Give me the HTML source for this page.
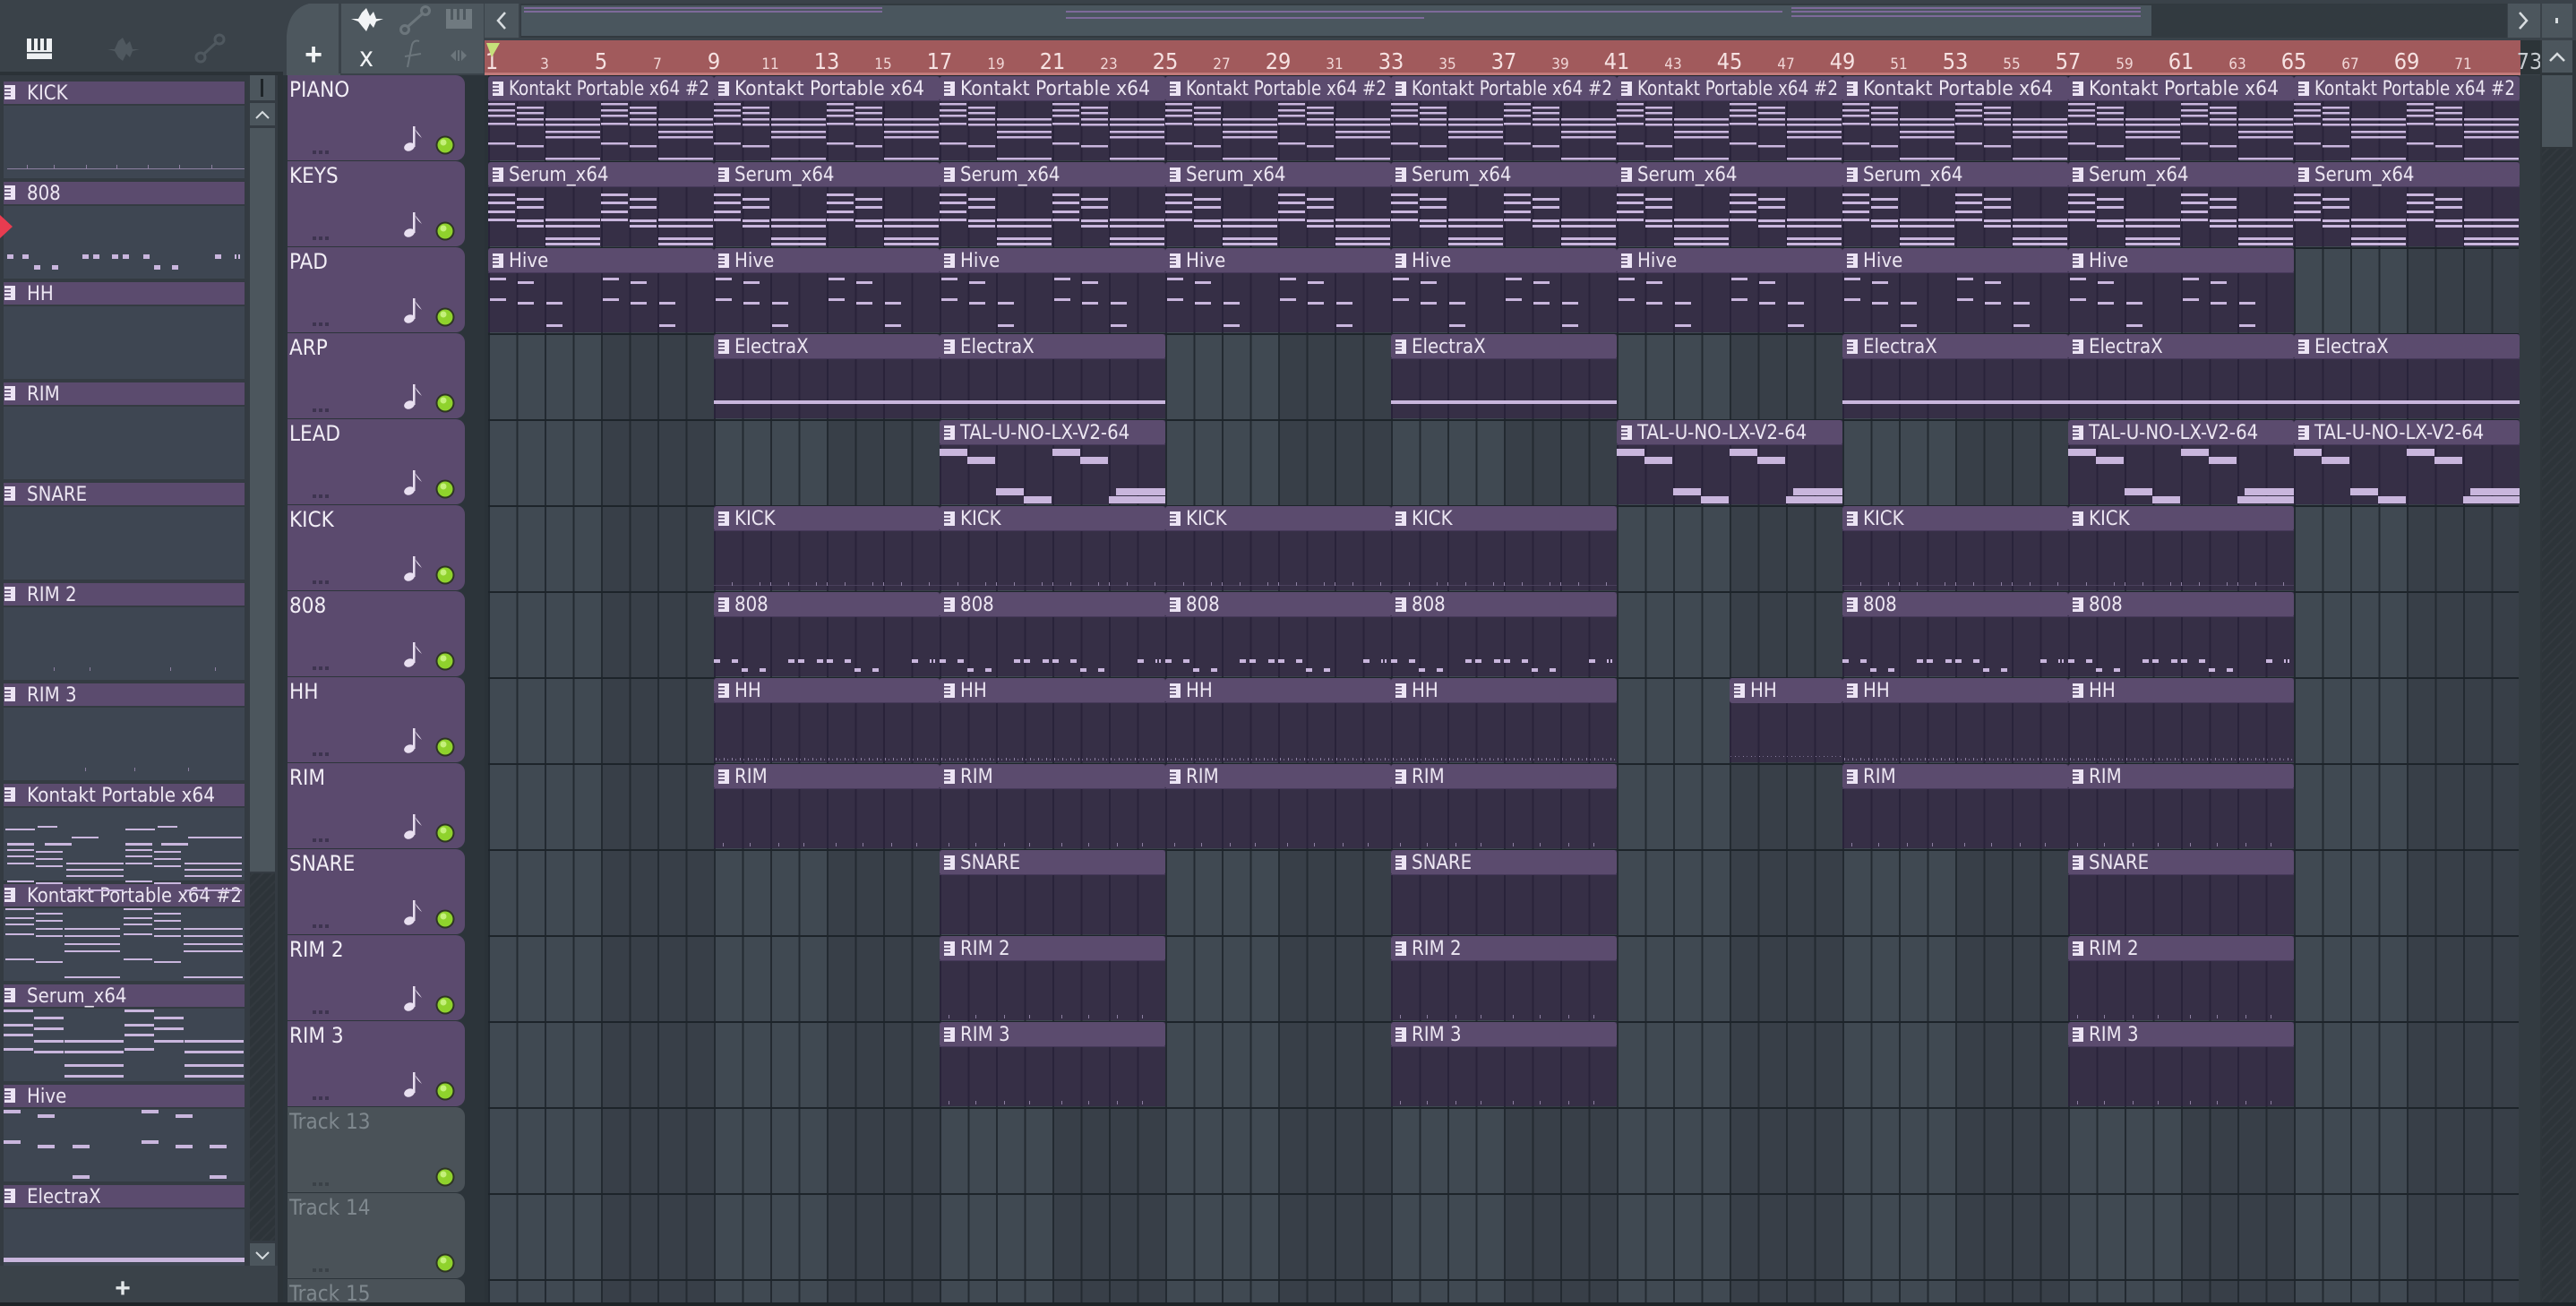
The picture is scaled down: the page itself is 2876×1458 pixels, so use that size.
<!DOCTYPE html>
<html><head><meta charset="utf-8"><style>
html,body{margin:0;padding:0;background:#3a4249;overflow:hidden;width:2876px;height:1458px}
svg{display:block}
text{font-family:"Liberation Sans Narrow","DejaVu Sans Condensed","Liberation Sans",sans-serif}
.ct{fill:#ece6f2;font-size:22px}
.hn{fill:#f2eef6;font-size:24px}
.he{fill:#7f888e;font-size:24px}
.rb{fill:#f6e2e2;font-size:25px;text-anchor:middle}
.rs{fill:#f0d6d6;font-size:17px;text-anchor:middle}
.lt{fill:#ece6f2;font-size:22px}
</style></head><body>
<svg width="2876" height="1458" viewBox="0 0 2876 1458" xmlns="http://www.w3.org/2000/svg">
<defs>
<pattern id="gp" x="545" y="84" width="252" height="96" patternUnits="userSpaceOnUse">
<rect width="126" height="96" fill="#404952"/><rect x="126" width="126" height="96" fill="#383f48"/>
<rect x="0" width="2" height="96" fill="#232a31"/><rect x="31.5" width="2" height="96" fill="#232a31"/><rect x="63" width="2" height="96" fill="#232a31"/><rect x="94.5" width="2" height="96" fill="#232a31"/><rect x="126" width="2" height="96" fill="#232a31"/><rect x="157.5" width="2" height="96" fill="#232a31"/><rect x="189" width="2" height="96" fill="#232a31"/><rect x="220.5" width="2" height="96" fill="#232a31"/>
<rect width="252" height="2" fill="#1d242a"/>
</pattern>
<pattern id="bp" x="0" y="0" width="31.5" height="200" patternUnits="userSpaceOnUse">
<rect width="31.5" height="200" fill="#362f46"/><rect width="2" height="200" fill="#29233a"/>
</pattern>
<g id="ic"><rect x="5" y="7" width="12" height="16" fill="#ece4f4"/><rect x="5" y="10" width="7" height="1.6" fill="#5b4b6e"/><rect x="5" y="14" width="7" height="1.6" fill="#5b4b6e"/><rect x="5" y="18" width="7" height="1.6" fill="#5b4b6e"/></g>
<g id="c"><rect x="0" y="1" width="252" height="94" fill="url(#bp)"/><rect x="0" y="1" width="252" height="28" rx="3" fill="#5b4b6e"/><rect x="0" y="28" width="252" height="1" fill="#46395a"/><use href="#ic"/></g>
<g id="ch"><rect x="0" y="1" width="126" height="94" fill="url(#bp)"/><rect x="0" y="1" width="126" height="28" rx="3" fill="#5b4b6e"/><use href="#ic"/></g>
<g id="pq" fill="#c9b6dd">
<rect x="0" y="31" width="30" height="2.5"/><rect x="0" y="38" width="30" height="2.5"/><rect x="0" y="44" width="30" height="2.5"/><rect x="0" y="53" width="30" height="2.5"/><rect x="0" y="75" width="30" height="2.5"/>
<rect x="32" y="35" width="30" height="2.5"/><rect x="32" y="41" width="30" height="2.5"/><rect x="32" y="48" width="30" height="2.5"/><rect x="32" y="54" width="30" height="2.5"/><rect x="32" y="78" width="30" height="2.5"/>
<rect x="64" y="48" width="61" height="2.5"/><rect x="64" y="54" width="61" height="2.5"/><rect x="64" y="62" width="61" height="2.5"/><rect x="64" y="68" width="61" height="2.5"/><rect x="64" y="92" width="61" height="2.5"/>
</g>
<g id="nP"><use href="#pq"/><use href="#pq" x="126"/></g>
<g id="kq" fill="#c9b6dd">
<rect x="0" y="36" width="30" height="3"/><rect x="0" y="45" width="30" height="3"/><rect x="0" y="55" width="30" height="3"/><rect x="0" y="64" width="30" height="3"/>
<rect x="32" y="41" width="30" height="3"/><rect x="32" y="50" width="30" height="3"/><rect x="32" y="65" width="30" height="3"/><rect x="32" y="71" width="30" height="3"/>
<rect x="64" y="64" width="61" height="3"/><rect x="64" y="71" width="61" height="3"/><rect x="64" y="85" width="61" height="3"/><rect x="64" y="91" width="61" height="3"/>
</g>
<g id="nK"><use href="#kq"/><use href="#kq" x="126"/></g>
<g id="hq" fill="#c9b6dd"><rect x="2" y="34" width="18" height="3"/><rect x="33" y="38" width="18" height="3"/><rect x="2" y="57" width="18" height="3"/><rect x="33" y="61" width="18" height="3"/><rect x="65" y="61" width="18" height="3"/><rect x="65" y="86" width="18" height="3"/></g>
<g id="nH"><use href="#hq"/><use href="#hq" x="126"/></g>
<g id="nE"><rect x="0" y="75" width="252" height="4" fill="#c9b6dd"/></g>
<g id="nT" fill="#c9b6dd"><rect x="0" y="33" width="31" height="8"/><rect x="31" y="42" width="31" height="8"/><rect x="63" y="77" width="31" height="8"/><rect x="94" y="86" width="31" height="8"/><rect x="126" y="33" width="31" height="8"/><rect x="157" y="42" width="31" height="8"/><rect x="197" y="77" width="55" height="8"/><rect x="189" y="86" width="63" height="8"/></g>
<g id="nD" fill="#c9b6dd"><rect x="0" y="76" width="7" height="4"/><rect x="20" y="76" width="7" height="4"/><rect x="31" y="86" width="7" height="4"/><rect x="51" y="86" width="7" height="4"/><rect x="83" y="76" width="7" height="4"/><rect x="94" y="76" width="7" height="4"/><rect x="115" y="76" width="7" height="4"/><rect x="126" y="76" width="7" height="4"/><rect x="146" y="76" width="7" height="4"/><rect x="157" y="86" width="7" height="4"/><rect x="177" y="86" width="7" height="4"/><rect x="221" y="76" width="7" height="4"/><rect x="241" y="76" width="2" height="4"/><rect x="245" y="76" width="2" height="4"/></g>
<g id="nKk" fill="#8c7fa0"><rect x="0" y="89" width="252" height="1" fill="#4a405c"/><rect x="20" y="86" width="1" height="4"/><rect x="51" y="86" width="1" height="4"/><rect x="63" y="86" width="1" height="4"/><rect x="83" y="86" width="1" height="4"/><rect x="114" y="86" width="1" height="4"/><rect x="126" y="86" width="1" height="4"/><rect x="146" y="86" width="1" height="4"/><rect x="177" y="86" width="1" height="4"/><rect x="189" y="86" width="1" height="4"/><rect x="209" y="86" width="1" height="4"/><rect x="240" y="86" width="1" height="4"/></g>
<pattern id="hhp" x="0" y="0" width="9" height="10" patternUnits="userSpaceOnUse"><rect x="2" y="0" width="1" height="5" fill="#8c7fa0"/><rect x="6" y="1" width="1" height="4" fill="#6f6485"/></pattern>
<g id="nHH"><rect x="0" y="88" width="252" height="5" fill="url(#hhp)"/></g>
<g id="nR" fill="#8c7fa0"><rect x="10" y="89" width="1" height="4"/><rect x="40" y="89" width="1" height="4"/><rect x="72" y="89" width="1" height="4"/><rect x="100" y="89" width="1" height="4"/><rect x="136" y="89" width="1" height="4"/><rect x="166" y="89" width="1" height="4"/><rect x="198" y="89" width="1" height="4"/><rect x="226" y="89" width="1" height="4"/></g>
<g id="hd"><rect x="0" y="0" width="198" height="95" rx="10" fill="#5b4a6e"/><rect x="0" y="0" width="20" height="95" fill="#5b4a6e"/>
<rect x="28" y="84" width="4" height="4" fill="#3e3450"/><rect x="35" y="84" width="4" height="4" fill="#3e3450"/><rect x="42" y="84" width="4" height="4" fill="#3e3450"/>
<ellipse cx="136" cy="80" rx="6" ry="4.5" fill="#e8dff0" transform="rotate(-20 136 80)"/><rect x="140" y="57" width="2.5" height="23" fill="#e8dff0"/><path d="M141 57 Q144 66 150 70 Q146 64 142 60 Z" fill="#e8dff0"/>
<circle cx="176" cy="78" r="10.5" fill="#2e3524"/><circle cx="176" cy="78" r="8.5" fill="#8fd22c"/><circle cx="174" cy="75" r="3.5" fill="#c4f07a"/></g>
<g id="he"><rect x="0" y="0" width="198" height="95" rx="10" fill="#4a5258"/><rect x="0" y="0" width="20" height="95" fill="#4a5258"/>
<rect x="28" y="84" width="4" height="4" fill="#3b4248"/><rect x="35" y="84" width="4" height="4" fill="#3b4248"/><rect x="42" y="84" width="4" height="4" fill="#3b4248"/>
<circle cx="176" cy="78" r="10.5" fill="#2e3524"/><circle cx="176" cy="78" r="8.5" fill="#8fd22c"/><circle cx="174" cy="75" r="3.5" fill="#c4f07a"/></g>
<g id="li"><rect x="4" y="0" width="269" height="25" fill="#5b4b6e"/><rect x="4" y="27" width="269" height="81" fill="#3e4652"/><use href="#ic" y="-3"/></g>
<pattern id="hatch" width="8" height="8" patternUnits="userSpaceOnUse" patternTransform="rotate(45)"><rect width="8" height="8" fill="#2d3439"/><rect width="2" height="8" fill="#33393f"/></pattern>
</defs>

<rect x="0" y="0" width="2876" height="84" fill="#3a4249"/>
<rect x="0" y="80" width="316" height="4" fill="#2b3237"/>
<g fill="#eef0f2"><rect x="30" y="43" width="28" height="23"/></g>
<g fill="#3a4249"><rect x="35" y="43" width="3" height="13"/><rect x="42" y="43" width="3" height="13"/><rect x="49" y="43" width="3" height="13"/><rect x="30" y="58" width="28" height="1.5"/></g>
<path d="M120 55 L128 55 L132 46 L137 42 L141 50 L145 46 L148 55 L156 55 L148 57 L145 64 L141 60 L137 68 L132 64 L128 57 Z" fill="#4f585f"/>
<g stroke="#4f585f" stroke-width="3" fill="none"><circle cx="224" cy="64" r="5"/><circle cx="245" cy="44" r="5"/><line x1="228" y1="60" x2="241" y2="48"/></g>
<path d="M320 84 L320 40 Q322 10 345 4 L380 4 L380 84 Z" fill="#4d575e"/>
<rect x="380" y="4" width="160" height="78" fill="#4d575e"/>
<rect x="378" y="4" width="3" height="78" fill="#3a4249"/>
<text x="350" y="72" fill="#f2f4f6" font-size="34" text-anchor="middle" style="font-family:'Liberation Sans',sans-serif;font-weight:bold">+</text>
<path d="M392 21 L400 21 L404 14 L409 9 L413 18 L417 13 L420 21 L428 21 L420 24 L417 31 L413 26 L409 35 L404 29 L400 24 Z" fill="#f2f4f6"/>
<g stroke="#6c767c" stroke-width="3" fill="none"><circle cx="452" cy="33" r="4.5"/><circle cx="475" cy="12" r="4.5"/><line x1="455" y1="30" x2="472" y2="15"/></g>
<rect x="498" y="10" width="29" height="22" fill="#707a80"/><g fill="#4d575e"><rect x="503" y="10" width="3" height="12"/><rect x="510" y="10" width="3" height="12"/><rect x="517" y="10" width="3" height="12"/></g>
<text x="409" y="74" fill="#f2f4f6" font-size="30" text-anchor="middle">x</text>
<path d="M455 75 L460 50 Q462 44 468 46 M452 63 L470 60" stroke="#6c767c" stroke-width="2" fill="none"/>
<path d="M503 62 L509 56 L509 68 Z M521 62 L515 56 L515 68 Z" fill="#6c767c"/><rect x="511" y="56" width="2" height="12" fill="#6c767c"/>
<rect x="541" y="4" width="38" height="38" fill="#4c565d"/><path d="M564 14 L556 23 L564 32" stroke="#d8dde0" stroke-width="2.5" fill="none"/>
<rect x="581" y="4" width="2218" height="38" fill="#323a40"/>
<rect x="582" y="6" width="1820" height="34" fill="#4a565e"/>
<rect x="585" y="8" width="400" height="2" fill="#7d6a9a"/><rect x="585" y="12" width="400" height="2" fill="#7d6a9a"/>
<rect x="1190" y="12" width="800" height="2" fill="#7d6a9a"/><rect x="1190" y="19" width="400" height="2" fill="#7d6a9a"/>
<rect x="2000" y="8" width="390" height="2" fill="#7d6a9a"/><rect x="2000" y="12" width="390" height="2" fill="#7d6a9a"/><rect x="2000" y="17" width="390" height="2" fill="#7d6a9a"/>
<rect x="2800" y="4" width="36" height="38" fill="#4c565d"/><path d="M2813 14 L2821 23 L2813 32" stroke="#d8dde0" stroke-width="2.5" fill="none"/>
<rect x="2838" y="4" width="34" height="38" fill="#4c565d"/><rect x="2853" y="20" width="3" height="6" fill="#d8dde0"/>

<rect x="541" y="45" width="2273" height="38" fill="#a15a5c"/>
<rect x="2814" y="45" width="22" height="38" fill="#2c3438"/>
<rect x="541" y="81" width="2273" height="3" fill="#c27a7a"/>
<text class="rs" x="608" y="77">3</text><text class="rb" x="671" y="77">5</text><text class="rs" x="734" y="77">7</text><text class="rb" x="797" y="77">9</text><text class="rs" x="860" y="77">11</text><text class="rb" x="923" y="77">13</text><text class="rs" x="986" y="77">15</text><text class="rb" x="1049" y="77">17</text><text class="rs" x="1112" y="77">19</text><text class="rb" x="1175" y="77">21</text><text class="rs" x="1238" y="77">23</text><text class="rb" x="1301" y="77">25</text><text class="rs" x="1364" y="77">27</text><text class="rb" x="1427" y="77">29</text><text class="rs" x="1490" y="77">31</text><text class="rb" x="1553" y="77">33</text><text class="rs" x="1616" y="77">35</text><text class="rb" x="1679" y="77">37</text><text class="rs" x="1742" y="77">39</text><text class="rb" x="1805" y="77">41</text><text class="rs" x="1868" y="77">43</text><text class="rb" x="1931" y="77">45</text><text class="rs" x="1994" y="77">47</text><text class="rb" x="2057" y="77">49</text><text class="rs" x="2120" y="77">51</text><text class="rb" x="2183" y="77">53</text><text class="rs" x="2246" y="77">55</text><text class="rb" x="2309" y="77">57</text><text class="rs" x="2372" y="77">59</text><text class="rb" x="2435" y="77">61</text><text class="rs" x="2498" y="77">63</text><text class="rb" x="2561" y="77">65</text><text class="rs" x="2624" y="77">67</text><text class="rb" x="2687" y="77">69</text><text class="rs" x="2750" y="77">71</text><text class="rb" x="2824" y="77" style="fill:#c6ccd0">73</text>
<text class="rb" x="549" y="77">1</text>
<path d="M543 48 L558 48 L549 64 Z" fill="#c6e07a"/>

<rect x="2836" y="45" width="40" height="1413" fill="#2f363b"/>
<rect x="2838" y="45" width="34" height="36" fill="#4c565d"/><path d="M2847 68 L2855 60 L2863 68" stroke="#d8dde0" stroke-width="2.5" fill="none"/>
<rect x="2838" y="84" width="34" height="80" fill="#4a545b"/>
<rect x="2838" y="166" width="34" height="1292" fill="url(#hatch)"/>

<rect x="541" y="84" width="2273" height="1374" fill="url(#gp)"/>
<rect x="519" y="84" width="22" height="1374" fill="#2c343a"/>
<rect x="541" y="84" width="4" height="1374" fill="#2a3238"/>
<rect x="2812" y="84" width="24" height="1374" fill="#333b41"/>

<rect x="316" y="84" width="203" height="1374" fill="#2c343a"/>
<use href="#hd" x="321" y="84"/><use href="#hd" x="321" y="180"/><use href="#hd" x="321" y="276"/><use href="#hd" x="321" y="372"/><use href="#hd" x="321" y="468"/><use href="#hd" x="321" y="564"/><use href="#hd" x="321" y="660"/><use href="#hd" x="321" y="756"/><use href="#hd" x="321" y="852"/><use href="#hd" x="321" y="948"/><use href="#hd" x="321" y="1044"/><use href="#hd" x="321" y="1140"/>
<use href="#he" x="321" y="1236"/><use href="#he" x="321" y="1332"/><use href="#he" x="321" y="1428"/>
<text class="hn" x="323" y="108">PIANO</text><text class="hn" x="323" y="204">KEYS</text><text class="hn" x="323" y="300">PAD</text><text class="hn" x="323" y="396">ARP</text><text class="hn" x="323" y="492">LEAD</text><text class="hn" x="323" y="588">KICK</text><text class="hn" x="323" y="684">808</text><text class="hn" x="323" y="780">HH</text><text class="hn" x="323" y="876">RIM</text><text class="hn" x="323" y="972">SNARE</text><text class="hn" x="323" y="1068">RIM 2</text><text class="hn" x="323" y="1164">RIM 3</text>
<text class="he" x="323" y="1260">Track 13</text><text class="he" x="323" y="1356">Track 14</text><text class="he" x="323" y="1452">Track 15</text>

<use href="#c" x="545" y="84"/><use href="#c" x="797" y="84"/><use href="#c" x="1049" y="84"/><use href="#c" x="1301" y="84"/><use href="#c" x="1553" y="84"/><use href="#c" x="1805" y="84"/><use href="#c" x="2057" y="84"/><use href="#c" x="2309" y="84"/><use href="#c" x="2561" y="84"/>
<use href="#nP" x="545" y="84"/><use href="#nP" x="797" y="84"/><use href="#nP" x="1049" y="84"/><use href="#nP" x="1301" y="84"/><use href="#nP" x="1553" y="84"/><use href="#nP" x="1805" y="84"/><use href="#nP" x="2057" y="84"/><use href="#nP" x="2309" y="84"/><use href="#nP" x="2561" y="84"/>
<text class="ct" x="568" y="106" textLength="224" lengthAdjust="spacingAndGlyphs">Kontakt Portable x64 #2</text><text class="ct" x="820" y="106" textLength="212" lengthAdjust="spacingAndGlyphs">Kontakt Portable x64</text><text class="ct" x="1072" y="106" textLength="212" lengthAdjust="spacingAndGlyphs">Kontakt Portable x64</text><text class="ct" x="1324" y="106" textLength="224" lengthAdjust="spacingAndGlyphs">Kontakt Portable x64 #2</text><text class="ct" x="1576" y="106" textLength="224" lengthAdjust="spacingAndGlyphs">Kontakt Portable x64 #2</text><text class="ct" x="1828" y="106" textLength="224" lengthAdjust="spacingAndGlyphs">Kontakt Portable x64 #2</text><text class="ct" x="2080" y="106" textLength="212" lengthAdjust="spacingAndGlyphs">Kontakt Portable x64</text><text class="ct" x="2332" y="106" textLength="212" lengthAdjust="spacingAndGlyphs">Kontakt Portable x64</text><text class="ct" x="2584" y="106" textLength="224" lengthAdjust="spacingAndGlyphs">Kontakt Portable x64 #2</text>
<use href="#c" x="545" y="180"/><use href="#c" x="797" y="180"/><use href="#c" x="1049" y="180"/><use href="#c" x="1301" y="180"/><use href="#c" x="1553" y="180"/><use href="#c" x="1805" y="180"/><use href="#c" x="2057" y="180"/><use href="#c" x="2309" y="180"/><use href="#c" x="2561" y="180"/>
<use href="#nK" x="545" y="180"/><use href="#nK" x="797" y="180"/><use href="#nK" x="1049" y="180"/><use href="#nK" x="1301" y="180"/><use href="#nK" x="1553" y="180"/><use href="#nK" x="1805" y="180"/><use href="#nK" x="2057" y="180"/><use href="#nK" x="2309" y="180"/><use href="#nK" x="2561" y="180"/>
<text class="ct" x="568" y="202">Serum_x64</text><text class="ct" x="820" y="202">Serum_x64</text><text class="ct" x="1072" y="202">Serum_x64</text><text class="ct" x="1324" y="202">Serum_x64</text><text class="ct" x="1576" y="202">Serum_x64</text><text class="ct" x="1828" y="202">Serum_x64</text><text class="ct" x="2080" y="202">Serum_x64</text><text class="ct" x="2332" y="202">Serum_x64</text><text class="ct" x="2584" y="202">Serum_x64</text>
<use href="#c" x="545" y="276"/><use href="#c" x="797" y="276"/><use href="#c" x="1049" y="276"/><use href="#c" x="1301" y="276"/><use href="#c" x="1553" y="276"/><use href="#c" x="1805" y="276"/><use href="#c" x="2057" y="276"/><use href="#c" x="2309" y="276"/>
<use href="#nH" x="545" y="276"/><use href="#nH" x="797" y="276"/><use href="#nH" x="1049" y="276"/><use href="#nH" x="1301" y="276"/><use href="#nH" x="1553" y="276"/><use href="#nH" x="1805" y="276"/><use href="#nH" x="2057" y="276"/><use href="#nH" x="2309" y="276"/>
<text class="ct" x="568" y="298">Hive</text><text class="ct" x="820" y="298">Hive</text><text class="ct" x="1072" y="298">Hive</text><text class="ct" x="1324" y="298">Hive</text><text class="ct" x="1576" y="298">Hive</text><text class="ct" x="1828" y="298">Hive</text><text class="ct" x="2080" y="298">Hive</text><text class="ct" x="2332" y="298">Hive</text>
<use href="#c" x="797" y="372"/><use href="#c" x="1049" y="372"/><use href="#c" x="1553" y="372"/><use href="#c" x="2057" y="372"/><use href="#c" x="2309" y="372"/><use href="#c" x="2561" y="372"/>
<use href="#nE" x="797" y="372"/><use href="#nE" x="1049" y="372"/><use href="#nE" x="1553" y="372"/><use href="#nE" x="2057" y="372"/><use href="#nE" x="2309" y="372"/><use href="#nE" x="2561" y="372"/>
<text class="ct" x="820" y="394">ElectraX</text><text class="ct" x="1072" y="394">ElectraX</text><text class="ct" x="1576" y="394">ElectraX</text><text class="ct" x="2080" y="394">ElectraX</text><text class="ct" x="2332" y="394">ElectraX</text><text class="ct" x="2584" y="394">ElectraX</text>
<use href="#c" x="1049" y="468"/><use href="#c" x="1805" y="468"/><use href="#c" x="2309" y="468"/><use href="#c" x="2561" y="468"/>
<use href="#nT" x="1049" y="468"/><use href="#nT" x="1805" y="468"/><use href="#nT" x="2309" y="468"/><use href="#nT" x="2561" y="468"/>
<text class="ct" x="1072" y="490">TAL-U-NO-LX-V2-64</text><text class="ct" x="1828" y="490">TAL-U-NO-LX-V2-64</text><text class="ct" x="2332" y="490">TAL-U-NO-LX-V2-64</text><text class="ct" x="2584" y="490">TAL-U-NO-LX-V2-64</text>
<use href="#c" x="797" y="564"/><use href="#c" x="1049" y="564"/><use href="#c" x="1301" y="564"/><use href="#c" x="1553" y="564"/><use href="#c" x="2057" y="564"/><use href="#c" x="2309" y="564"/>
<use href="#nKk" x="797" y="564"/><use href="#nKk" x="1049" y="564"/><use href="#nKk" x="1301" y="564"/><use href="#nKk" x="1553" y="564"/><use href="#nKk" x="2057" y="564"/><use href="#nKk" x="2309" y="564"/>
<text class="ct" x="820" y="586">KICK</text><text class="ct" x="1072" y="586">KICK</text><text class="ct" x="1324" y="586">KICK</text><text class="ct" x="1576" y="586">KICK</text><text class="ct" x="2080" y="586">KICK</text><text class="ct" x="2332" y="586">KICK</text>
<use href="#c" x="797" y="660"/><use href="#c" x="1049" y="660"/><use href="#c" x="1301" y="660"/><use href="#c" x="1553" y="660"/><use href="#c" x="2057" y="660"/><use href="#c" x="2309" y="660"/>
<use href="#nD" x="797" y="660"/><use href="#nD" x="1049" y="660"/><use href="#nD" x="1301" y="660"/><use href="#nD" x="1553" y="660"/><use href="#nD" x="2057" y="660"/><use href="#nD" x="2309" y="660"/>
<text class="ct" x="820" y="682">808</text><text class="ct" x="1072" y="682">808</text><text class="ct" x="1324" y="682">808</text><text class="ct" x="1576" y="682">808</text><text class="ct" x="2080" y="682">808</text><text class="ct" x="2332" y="682">808</text>
<use href="#c" x="797" y="756"/><use href="#c" x="1049" y="756"/><use href="#c" x="1301" y="756"/><use href="#c" x="1553" y="756"/><use href="#ch" x="1931" y="756"/><use href="#c" x="2057" y="756"/><use href="#c" x="2309" y="756"/>
<use href="#nHH" x="797" y="756"/><use href="#nHH" x="1049" y="756"/><use href="#nHH" x="1301" y="756"/><use href="#nHH" x="1553" y="756"/><rect x="1931" y="844" width="126" height="5" fill="url(#hhp)"/><use href="#nHH" x="2057" y="756"/><use href="#nHH" x="2309" y="756"/>
<text class="ct" x="820" y="778">HH</text><text class="ct" x="1072" y="778">HH</text><text class="ct" x="1324" y="778">HH</text><text class="ct" x="1576" y="778">HH</text><text class="ct" x="1954" y="778">HH</text><text class="ct" x="2080" y="778">HH</text><text class="ct" x="2332" y="778">HH</text>
<use href="#c" x="797" y="852"/><use href="#c" x="1049" y="852"/><use href="#c" x="1301" y="852"/><use href="#c" x="1553" y="852"/><use href="#c" x="2057" y="852"/><use href="#c" x="2309" y="852"/>
<use href="#nR" x="797" y="852"/><use href="#nR" x="1049" y="852"/><use href="#nR" x="1301" y="852"/><use href="#nR" x="1553" y="852"/><use href="#nR" x="2057" y="852"/><use href="#nR" x="2309" y="852"/>
<text class="ct" x="820" y="874">RIM</text><text class="ct" x="1072" y="874">RIM</text><text class="ct" x="1324" y="874">RIM</text><text class="ct" x="1576" y="874">RIM</text><text class="ct" x="2080" y="874">RIM</text><text class="ct" x="2332" y="874">RIM</text>
<use href="#c" x="1049" y="948"/><use href="#c" x="1553" y="948"/><use href="#c" x="2309" y="948"/>
<use href="#c" x="1049" y="1044"/><use href="#c" x="1553" y="1044"/><use href="#c" x="2309" y="1044"/>
<use href="#c" x="1049" y="1140"/><use href="#c" x="1553" y="1140"/><use href="#c" x="2309" y="1140"/>
<use href="#nR" x="1049" y="1044"/><use href="#nR" x="1553" y="1044"/><use href="#nR" x="2309" y="1044"/>
<use href="#nR" x="1049" y="1140"/><use href="#nR" x="1553" y="1140"/><use href="#nR" x="2309" y="1140"/>
<text class="ct" x="1072" y="970">SNARE</text><text class="ct" x="1576" y="970">SNARE</text><text class="ct" x="2332" y="970">SNARE</text>
<text class="ct" x="1072" y="1066">RIM 2</text><text class="ct" x="1576" y="1066">RIM 2</text><text class="ct" x="2332" y="1066">RIM 2</text>
<text class="ct" x="1072" y="1162">RIM 3</text><text class="ct" x="1576" y="1162">RIM 3</text><text class="ct" x="2332" y="1162">RIM 3</text>

<rect x="0" y="84" width="316" height="1374" fill="#343b42"/>
<rect x="310" y="84" width="6" height="1374" fill="#2c3338"/>
<use href="#li" y="91"/><use href="#li" y="203"/><use href="#li" y="315"/><use href="#li" y="427"/><use href="#li" y="539"/><use href="#li" y="651"/><use href="#li" y="763"/><use href="#li" y="875"/><use href="#li" y="987"/><use href="#li" y="1099"/><use href="#li" y="1211"/><use href="#li" y="1323"/>
<text class="lt" x="30" y="111">KICK</text><text class="lt" x="30" y="223">808</text><text class="lt" x="30" y="335">HH</text><text class="lt" x="30" y="447">RIM</text><text class="lt" x="30" y="559">SNARE</text><text class="lt" x="30" y="671">RIM 2</text><text class="lt" x="30" y="783">RIM 3</text><text class="lt" x="30" y="895" textLength="210" lengthAdjust="spacingAndGlyphs">Kontakt Portable x64</text><text class="lt" x="30" y="1007" textLength="240" lengthAdjust="spacingAndGlyphs">Kontakt Portable x64 #2</text><text class="lt" x="30" y="1119">Serum_x64</text><text class="lt" x="30" y="1231">Hive</text><text class="lt" x="30" y="1343">ElectraX</text>
<g fill="#8c7fa0"><rect x="8" y="188" width="265" height="1"/><rect x="30" y="184" width="1" height="5"/><rect x="60" y="184" width="1" height="5"/><rect x="96" y="184" width="1" height="5"/><rect x="130" y="184" width="1" height="5"/><rect x="165" y="184" width="1" height="5"/><rect x="200" y="184" width="1" height="5"/><rect x="236" y="184" width="1" height="5"/></g>
<g fill="#c9b6dd"><rect x="8" y="284" width="7" height="5"/><rect x="25" y="284" width="7" height="5"/><rect x="38" y="296" width="7" height="5"/><rect x="58" y="296" width="7" height="5"/><rect x="92" y="284" width="7" height="5"/><rect x="104" y="284" width="7" height="5"/><rect x="125" y="284" width="7" height="5"/><rect x="137" y="284" width="7" height="5"/><rect x="160" y="284" width="7" height="5"/><rect x="172" y="296" width="7" height="5"/><rect x="192" y="296" width="7" height="5"/><rect x="240" y="284" width="7" height="5"/><rect x="262" y="284" width="2" height="5"/><rect x="266" y="284" width="2" height="5"/></g>
<path d="M0 240 L14 253 L0 266 Z" fill="#e83c50"/>
<g fill="#8c7fa0"><rect x="100" y="745" width="1" height="4"/><rect x="190" y="745" width="1" height="4"/><rect x="60" y="745" width="1" height="4"/><rect x="240" y="745" width="1" height="4"/><rect x="150" y="857" width="1" height="4"/><rect x="210" y="857" width="1" height="4"/><rect x="95" y="857" width="1" height="4"/></g>
<rect x="8" y="525" width="265" height="5" fill="url(#hhp)"/>
<g fill="#c9b6dd">
<rect x="6" y="925" width="33" height="2"/><rect x="42" y="922" width="22" height="2"/><rect x="80" y="934" width="30" height="2"/><rect x="8" y="941" width="30" height="3"/><rect x="50" y="941" width="30" height="3"/><rect x="8" y="948" width="30" height="2"/><rect x="40" y="950" width="30" height="2"/><rect x="8" y="955" width="30" height="2"/><rect x="40" y="958" width="30" height="2"/><rect x="8" y="963" width="30" height="2"/><rect x="40" y="966" width="30" height="2"/><rect x="74" y="963" width="64" height="2"/><rect x="74" y="970" width="64" height="2"/><rect x="74" y="977" width="64" height="2"/><rect x="8" y="983" width="30" height="2"/><rect x="40" y="985" width="30" height="2"/><rect x="74" y="993" width="64" height="2"/>
<rect x="140" y="925" width="33" height="2"/><rect x="176" y="922" width="22" height="2"/><rect x="210" y="934" width="60" height="2"/><rect x="140" y="941" width="30" height="3"/><rect x="180" y="941" width="30" height="3"/><rect x="140" y="948" width="30" height="2"/><rect x="172" y="950" width="30" height="2"/><rect x="140" y="955" width="30" height="2"/><rect x="172" y="958" width="30" height="2"/><rect x="140" y="963" width="30" height="2"/><rect x="172" y="966" width="30" height="2"/><rect x="206" y="963" width="64" height="2"/><rect x="206" y="970" width="64" height="2"/><rect x="206" y="977" width="64" height="2"/><rect x="140" y="983" width="30" height="2"/><rect x="172" y="985" width="30" height="2"/><rect x="206" y="993" width="64" height="2"/>
</g>
<g fill="#c9b6dd">
<rect x="6" y="1014" width="32" height="2"/><rect x="6" y="1024" width="32" height="2"/><rect x="6" y="1031" width="32" height="2"/><rect x="6" y="1042" width="32" height="2"/><rect x="6" y="1070" width="32" height="2"/><rect x="40" y="1019" width="30" height="2"/><rect x="40" y="1027" width="30" height="2"/><rect x="40" y="1036" width="30" height="2"/><rect x="40" y="1044" width="30" height="2"/><rect x="40" y="1073" width="30" height="2"/><rect x="72" y="1036" width="62" height="2"/><rect x="72" y="1044" width="62" height="2"/><rect x="72" y="1053" width="62" height="2"/><rect x="72" y="1061" width="62" height="2"/><rect x="72" y="1090" width="62" height="2"/>
<rect x="138" y="1014" width="32" height="2"/><rect x="138" y="1024" width="32" height="2"/><rect x="138" y="1031" width="32" height="2"/><rect x="138" y="1042" width="32" height="2"/><rect x="138" y="1070" width="32" height="2"/><rect x="172" y="1019" width="30" height="2"/><rect x="172" y="1027" width="30" height="2"/><rect x="172" y="1036" width="30" height="2"/><rect x="172" y="1044" width="30" height="2"/><rect x="172" y="1073" width="30" height="2"/><rect x="205" y="1036" width="66" height="2"/><rect x="205" y="1044" width="66" height="2"/><rect x="205" y="1053" width="66" height="2"/><rect x="205" y="1061" width="66" height="2"/><rect x="205" y="1090" width="66" height="2"/>
</g>
<g fill="#c9b6dd">
<rect x="4" y="1127" width="33" height="3"/><rect x="4" y="1143" width="33" height="3"/><rect x="4" y="1154" width="33" height="3"/><rect x="4" y="1170" width="33" height="3"/><rect x="38" y="1135" width="33" height="3"/><rect x="38" y="1147" width="33" height="3"/><rect x="38" y="1161" width="33" height="3"/><rect x="38" y="1173" width="33" height="3"/><rect x="72" y="1161" width="66" height="3"/><rect x="72" y="1173" width="66" height="3"/><rect x="72" y="1188" width="66" height="3"/><rect x="72" y="1200" width="66" height="3"/>
<rect x="139" y="1127" width="33" height="3"/><rect x="139" y="1143" width="33" height="3"/><rect x="139" y="1154" width="33" height="3"/><rect x="139" y="1170" width="33" height="3"/><rect x="172" y="1135" width="33" height="3"/><rect x="172" y="1147" width="33" height="3"/><rect x="172" y="1161" width="33" height="3"/><rect x="206" y="1161" width="66" height="3"/><rect x="206" y="1173" width="66" height="3"/><rect x="206" y="1188" width="66" height="3"/><rect x="206" y="1200" width="66" height="3"/>
</g>
<g fill="#c9b6dd"><rect x="4" y="1239" width="19" height="4"/><rect x="42" y="1244" width="19" height="4"/><rect x="4" y="1273" width="19" height="4"/><rect x="42" y="1278" width="19" height="4"/><rect x="81" y="1278" width="19" height="4"/><rect x="81" y="1312" width="19" height="4"/><rect x="158" y="1239" width="19" height="4"/><rect x="196" y="1244" width="19" height="4"/><rect x="158" y="1273" width="19" height="4"/><rect x="196" y="1278" width="19" height="4"/><rect x="234" y="1278" width="19" height="4"/><rect x="234" y="1312" width="19" height="4"/></g>
<rect x="4" y="1404" width="269" height="5" fill="#c9b6dd"/>
<rect x="279" y="84" width="28" height="28" fill="#4c565d"/><rect x="291" y="88" width="3" height="20" fill="#1e2428"/>
<rect x="279" y="115" width="28" height="25" fill="#4c565d"/><path d="M286 132 L293 125 L300 132" stroke="#d8dde0" stroke-width="2" fill="none"/>
<rect x="279" y="143" width="28" height="830" fill="#4c565d"/>
<rect x="279" y="975" width="28" height="410" fill="url(#hatch)"/>
<rect x="279" y="1388" width="28" height="25" fill="#4c565d"/><path d="M286 1398 L293 1405 L300 1398" stroke="#d8dde0" stroke-width="2" fill="none"/>
<rect x="0" y="1413" width="310" height="45" fill="#3a4249"/>
<text x="137" y="1448" fill="#e4e8ea" font-size="30" text-anchor="middle" style="font-family:'Liberation Sans',sans-serif;font-weight:bold">+</text>
<rect x="0" y="1454" width="2876" height="4" fill="#1e2428"/>
</svg>
</body></html>
